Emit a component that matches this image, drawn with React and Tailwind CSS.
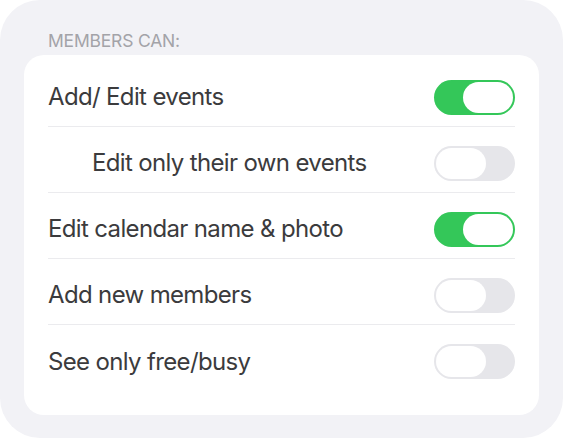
const permissions = [
  { label: 'Add/ Edit events', on: true },
  { label: 'Edit only their own events', on: false, indent: true },
  { label: 'Edit calendar name & photo', on: true },
  { label: 'Add new members', on: false },
  { label: 'See only free/busy', on: false },
]

function Toggle({ on }) {
  return (
    <div
      className={
        on
          ? 'w-[81px] h-[35px] rounded-full p-[2px] flex justify-end bg-[#34c759]'
          : 'w-[81px] h-[35px] rounded-full p-[2px] flex justify-start bg-[#e6e6ea]'
      }
    >
      <div className="w-[50px] h-full rounded-full bg-white"></div>
    </div>
  )
}

export default function App() {
  return (
    <div className="w-[563px] bg-white" style={{ fontFamily: 'Inter, "Noto Sans", sans-serif' }}>
      <div className="bg-[#f2f2f6] rounded-[40px] px-[24px] pt-[31px] pb-[23px]">
        <div className="pl-[24px] h-[20px] leading-[20px] text-[17.5px] tracking-[-0.2px] text-[#a3a3a8] mb-[4px]">MEMBERS CAN:</div>

        {/* Card */}
        <div className="bg-white rounded-[20px] px-[24px] pt-[6px] pb-[24px]">
          {permissions.map((p, i) => (
            <div
              key={p.label}
              className={
                i < permissions.length - 1
                  ? 'h-[66px] pt-[7px] flex items-center justify-between border-b border-[#ebebee]'
                  : 'h-[66px] pt-[7px] flex items-center justify-between'
              }
            >
              <span className={p.indent ? 'pl-[44px] text-[24px] text-[#3b3b3d] tracking-[-0.65px]' : 'text-[24px] text-[#3b3b3d] tracking-[-0.65px]'}>
                {p.label}
              </span>
              <Toggle on={p.on} />
            </div>
          ))}
        </div>
      </div>
    </div>
  )
}
